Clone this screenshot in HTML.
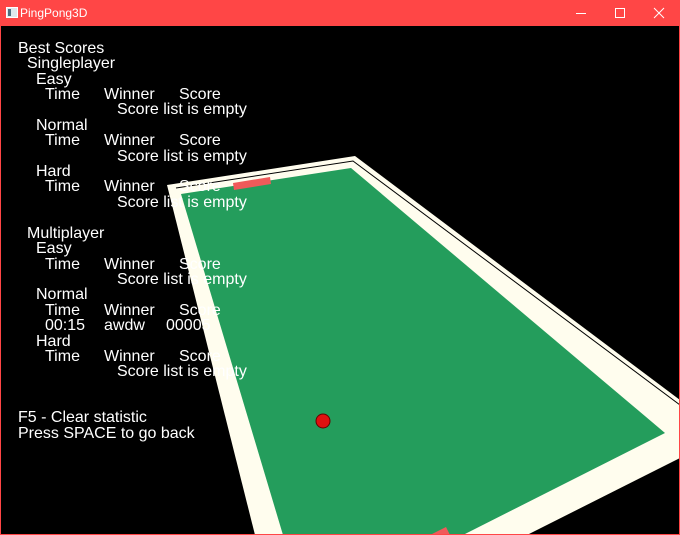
<!DOCTYPE html>
<html><head><style>
html,body{margin:0;padding:0;width:680px;height:535px;overflow:hidden;background:#000;}
#tb{position:absolute;left:0;top:0;width:680px;height:26px;background:#ff4646;}
#tb .t{position:absolute;left:20px;top:6px;color:#fff;font:12px "Liberation Sans",sans-serif;}
#frame{position:absolute;left:0;top:26px;width:678px;height:508px;border:1px solid #ff4646;border-top:0;}
.l{position:absolute;color:#fff;font:16px "Liberation Sans",sans-serif;white-space:pre;line-height:16px;margin-top:2px;}
</style></head><body>
<div id="tb">
<svg width="12" height="12" style="position:absolute;left:6px;top:7px"><rect x="0.5" y="0.5" width="11" height="10" fill="#dfe8ec" stroke="#fff"/><rect x="2" y="2" width="3" height="7" fill="#4d7080"/></svg>
<div class="t">PingPong3D</div>
<svg width="680" height="26" style="position:absolute;left:0;top:0" stroke="#fff" stroke-width="1" fill="none">
<line x1="576" y1="13.5" x2="586" y2="13.5"/>
<rect x="615.5" y="8.5" width="9" height="9"/>
<line x1="654" y1="8" x2="664" y2="18"/><line x1="664" y1="8" x2="654" y2="18"/>
</svg>
</div>
<svg width="680" height="535" style="position:absolute;left:0;top:0">
<polygon points="167,185 355,156 680,400 680,458 527,535 255,535" fill="#fffdee"/>
<polyline points="176,188 353,161 680,405" fill="none" stroke="#000" stroke-width="1"/>
<polyline points="540,535 680,462" fill="none" stroke="#000" stroke-width="1"/>
<polygon points="181,194 351,168 665,433 463,535 283,535" fill="#249d5c"/>
<polygon points="233,183 270,177 271,184 234,190" fill="#f05a5a"/>
<polygon points="430,535 446,527 450,535" fill="#f05a5a"/>
<circle cx="323" cy="421" r="7" fill="#e01010" stroke="#600" stroke-width="1"/>
</svg>
<div id="frame"></div>
<div class="l" style="left:18px;top:39px">Best Scores</div>
<div class="l" style="left:27px;top:54px">Singleplayer</div>
<div class="l" style="left:36px;top:70px">Easy</div>
<div class="l" style="left:45px;top:85px">Time</div><div class="l" style="left:104px;top:85px">Winner</div><div class="l" style="left:179px;top:85px">Score</div>
<div class="l" style="left:117px;top:100px">Score list is empty</div>
<div class="l" style="left:36px;top:116px">Normal</div>
<div class="l" style="left:45px;top:131px">Time</div><div class="l" style="left:104px;top:131px">Winner</div><div class="l" style="left:179px;top:131px">Score</div>
<div class="l" style="left:117px;top:147px">Score list is empty</div>
<div class="l" style="left:36px;top:162px">Hard</div>
<div class="l" style="left:45px;top:177px">Time</div><div class="l" style="left:104px;top:177px">Winner</div><div class="l" style="left:179px;top:177px">Score</div>
<div class="l" style="left:117px;top:193px">Score list is empty</div>
<div class="l" style="left:27px;top:224px">Multiplayer</div>
<div class="l" style="left:36px;top:239px">Easy</div>
<div class="l" style="left:45px;top:255px">Time</div><div class="l" style="left:104px;top:255px">Winner</div><div class="l" style="left:179px;top:255px">Score</div>
<div class="l" style="left:117px;top:270px">Score list is empty</div>
<div class="l" style="left:36px;top:285px">Normal</div>
<div class="l" style="left:45px;top:301px">Time</div><div class="l" style="left:104px;top:301px">Winner</div><div class="l" style="left:179px;top:301px">Score</div>
<div class="l" style="left:45px;top:316px">00:15</div><div class="l" style="left:104px;top:316px">awdw</div><div class="l" style="left:166px;top:316px">00005</div>
<div class="l" style="left:36px;top:332px">Hard</div>
<div class="l" style="left:45px;top:347px">Time</div><div class="l" style="left:104px;top:347px">Winner</div><div class="l" style="left:179px;top:347px">Score</div>
<div class="l" style="left:117px;top:362px">Score list is empty</div>
<div class="l" style="left:18px;top:408px">F5 - Clear statistic</div>
<div class="l" style="left:18px;top:424px">Press SPACE to go back</div>
</body></html>
